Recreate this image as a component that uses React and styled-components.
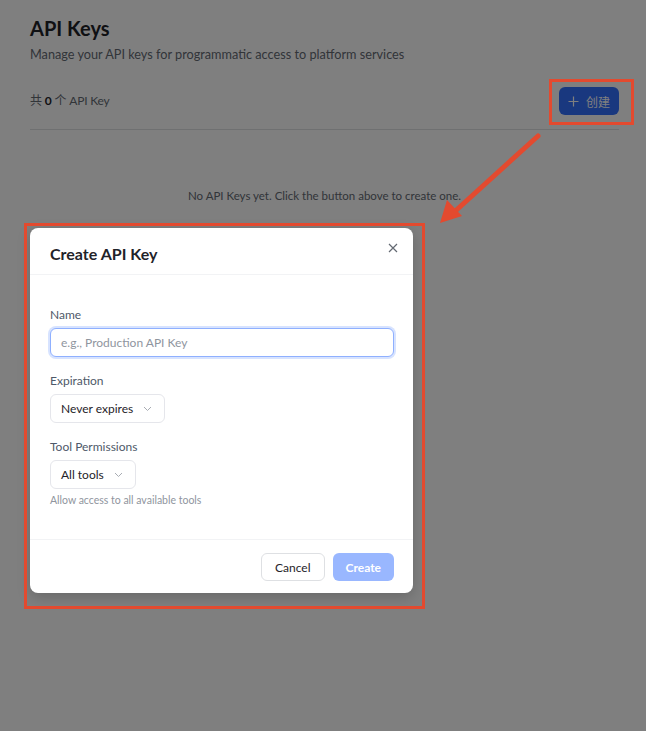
import React from "react";
import styled, { createGlobalStyle } from "styled-components";

const GlobalStyle = createGlobalStyle`
  html, body { margin: 0; padding: 0; background: #fff; }
  body {
    font-family: Lato, "Noto Sans CJK SC", sans-serif;
    color: #1f2329;
    width: 646px;
    height: 731px;
    overflow: hidden;
  }
  * { box-sizing: border-box; }
`;

const Page = styled.div`
  position: relative;
  width: 646px;
  height: 731px;
  padding: 14px 27px 0 30px;
`;

const Title = styled.h1`
  margin: 0;
  font-size: 20px;
  font-weight: 700;
  line-height: 28px;
  color: #1f2329;
`;

const Subtitle = styled.p`
  margin: 3px 0 0;
  font-size: 12.7px;
  line-height: 18px;
  color: #646a73;
`;

const Toolbar = styled.div`
  display: flex;
  align-items: center;
  justify-content: space-between;
  margin-top: 24px;
  padding-bottom: 14px;
  border-bottom: 1px solid #dee0e3;
`;

const Count = styled.span`
  font-size: 12px;
  line-height: 16px;
  color: #646a73;
  letter-spacing: -0.2px;
  margin-top: -1px;
  b { color: #1f2329; font-weight: 700; margin: 0 3px; }
`;

const PrimaryButton = styled.button`
  display: inline-flex;
  align-items: center;
  gap: 7px;
  height: 28px;
  padding: 0 9px;
  border: none;
  border-radius: 6px;
  background: #3370ff;
  color: #fff;
  font-family: inherit;
  font-size: 12px;
`;

const Empty = styled.div`
  text-align: center;
  margin-top: 59px;
  font-size: 11.5px;
  color: #646a73;
`;

const Mask = styled.div`
  position: absolute;
  inset: 0;
  background: rgba(0, 0, 0, 0.5);
`;

const Dialog = styled.div`
  position: absolute;
  left: 30px;
  top: 228px;
  width: 383px;
  background: #fff;
  border-radius: 8px;
  box-shadow: 0 4px 14px rgba(0, 0, 0, 0.18);
  display: flex;
  flex-direction: column;
`;

const DialogHeader = styled.div`
  position: relative;
  display: flex;
  align-items: center;
  height: 47px;
  padding: 4px 20px 0;
  border-bottom: 1px solid #f2f3f5;
`;

const DialogTitle = styled.h2`
  margin: 0;
  font-size: 16px;
  font-weight: 700;
  color: #1f2329;
`;

const CloseButton = styled.button`
  position: absolute;
  right: 12px;
  top: 12px;
  width: 16px;
  height: 16px;
  padding: 0;
  border: none;
  background: none;
  display: flex;
  align-items: center;
  justify-content: center;
`;

const DialogBody = styled.div`
  display: flex;
  flex-direction: column;
  padding: 31px 19px 31px 20px;
`;

const Field = styled.div`
  display: flex;
  flex-direction: column;
  align-items: flex-start;
  & + & { margin-top: 15px; }
`;

const Label = styled.label`
  font-size: 12px;
  line-height: 18px;
  color: #4e5969;
  margin-bottom: 4px;
`;

const TextInput = styled.input`
  width: 100%;
  height: 29px;
  padding: 0 10px;
  border: 1px solid #8fb0ff;
  border-radius: 6px;
  box-shadow: 0 0 0 2px #d7e3ff;
  outline: none;
  font-family: inherit;
  font-size: 12px;
  color: #1f2329;
  &::placeholder { color: #8f959e; }
`;

const Select = styled.div`
  display: inline-flex;
  align-items: center;
  gap: 10px;
  height: 29px;
  padding: 0 12px 0 10px;
  border: 1px solid #e5e6eb;
  border-radius: 6px;
  font-size: 12px;
  color: #1f2329;
`;

const Hint = styled.div`
  margin-top: 3px;
  font-size: 10.5px;
  line-height: 16px;
  color: #8f959e;
`;

const DialogFooter = styled.div`
  display: flex;
  justify-content: flex-end;
  gap: 8px;
  padding: 13px 19px 12px 20px;
  border-top: 1px solid #f2f3f5;
`;

const Button = styled.button`
  height: 28px;
  padding: 0 ${(p) => (p.$primary ? 12 : 13)}px;
  border-radius: 6px;
  font-family: inherit;
  font-size: 12px;
  border: 1px solid ${(p) => (p.$primary ? "transparent" : "#dee0e3")};
  background: ${(p) => (p.$primary ? "#99b7ff" : "#fff")};
  color: ${(p) => (p.$primary ? "#fff" : "#1f2329")};
  font-weight: ${(p) => (p.$primary ? 700 : 400)};
`;

const Callout = styled.div`
  position: absolute;
  left: ${(p) => p.$x}px;
  top: ${(p) => p.$y}px;
  width: ${(p) => p.$w}px;
  height: ${(p) => p.$h}px;
  border: 3px solid #e34a2f;
  pointer-events: none;
`;

const ArrowLayer = styled.svg`
  position: absolute;
  left: 0;
  top: 0;
  pointer-events: none;
`;

const Chevron = () => (
  <svg width="9" height="6" viewBox="0 0 9 6" fill="none">
    <path d="M1 1l3.5 3.5L8 1" stroke="#a8acb3" strokeWidth="1" />
  </svg>
);

export default function App() {
  return (
    <>
      <GlobalStyle />
      <Page>
        <Title>API Keys</Title>
        <Subtitle>Manage your API keys for programmatic access to platform services</Subtitle>
        <Toolbar>
          <Count>
            共<b>0</b>个 API Key
          </Count>
          <PrimaryButton>
            <svg width="11" height="11" viewBox="0 0 11 11">
              <path d="M5.5 0.5v10M0.5 5.5h10" stroke="#fff" strokeWidth="1.2" />
            </svg>
            创建
          </PrimaryButton>
        </Toolbar>
        <Empty>No API Keys yet. Click the button above to create one.</Empty>

        <Mask />

        <Dialog>
          <DialogHeader>
            <DialogTitle>Create API Key</DialogTitle>
            <CloseButton aria-label="close">
              <svg width="10" height="10" viewBox="0 0 10 10">
                <path d="M1 1l8 8M9 1l-8 8" stroke="#646a73" strokeWidth="1.2" />
              </svg>
            </CloseButton>
          </DialogHeader>
          <DialogBody>
            <Field>
              <Label>Name</Label>
              <TextInput placeholder="e.g., Production API Key" />
            </Field>
            <Field>
              <Label>Expiration</Label>
              <Select>
                Never expires <Chevron />
              </Select>
            </Field>
            <Field>
              <Label>Tool Permissions</Label>
              <Select>
                All tools <Chevron />
              </Select>
              <Hint>Allow access to all available tools</Hint>
            </Field>
          </DialogBody>
          <DialogFooter>
            <Button>Cancel</Button>
            <Button $primary>Create</Button>
          </DialogFooter>
        </Dialog>

        <Callout $x={549} $y={79} $w={85} $h={46} />
        <Callout $x={24} $y={223} $w={401} $h={386} />
        <ArrowLayer width="646" height="731">
          <path d="M538 136 L452 214" stroke="#e34a2f" strokeWidth="5" strokeLinecap="round" />
          <path d="M440 223 L447 200 L462 216 Z" fill="#e34a2f" />
        </ArrowLayer>
      </Page>
    </>
  );
}
